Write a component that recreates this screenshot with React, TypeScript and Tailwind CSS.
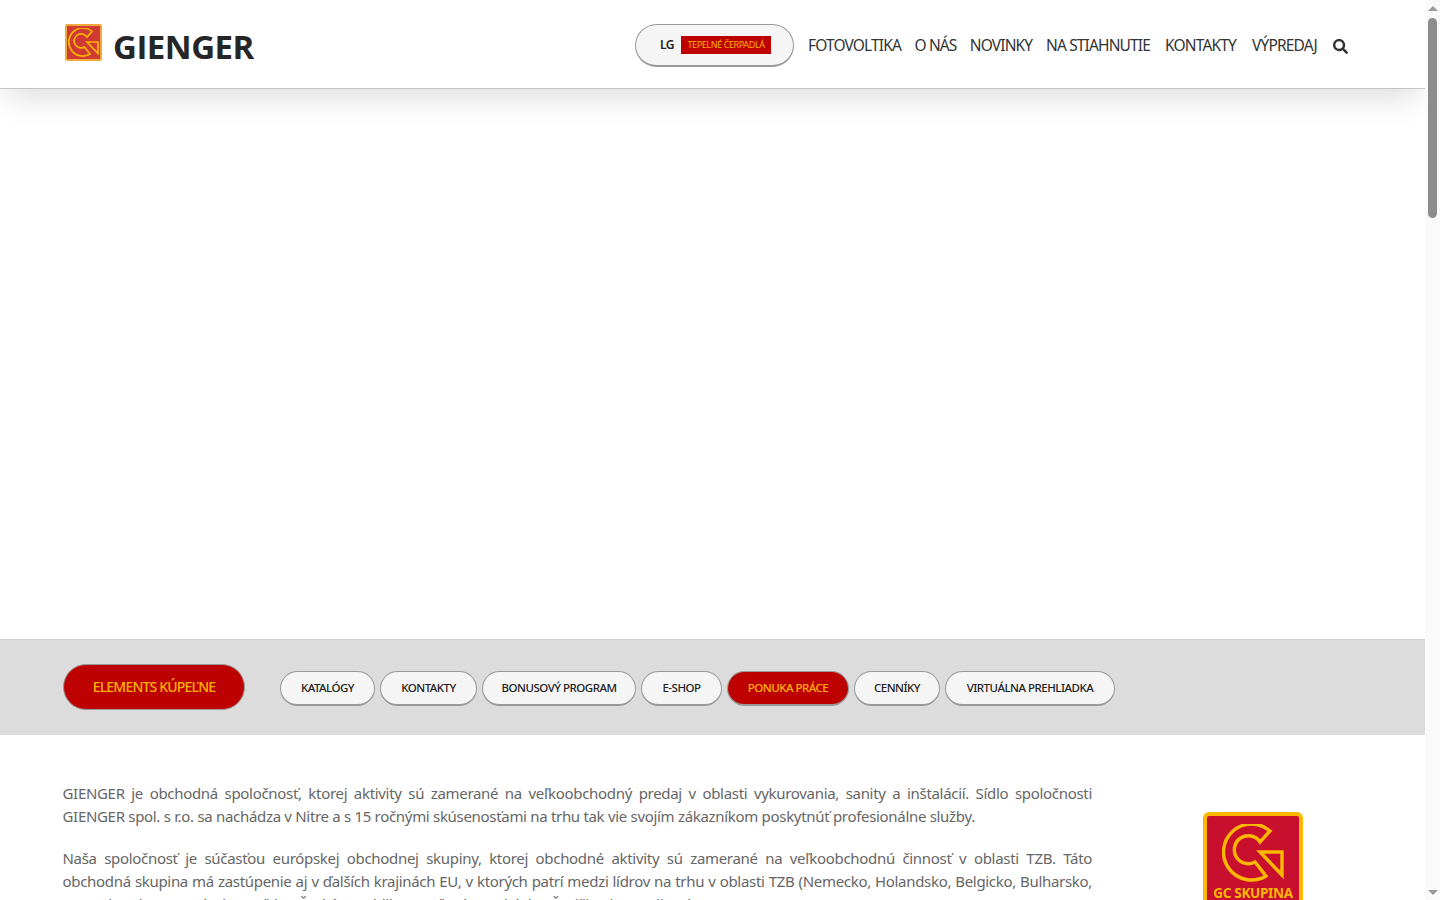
/**
 * Gienger landing page: header, hero gap, link bar and intro text.
 */

import { FaSearch } from 'react-icons/fa';

const navLinks = [
  { label: 'FOTOVOLTIKA', width: 'w-[91px]' },
  { label: 'O NÁS', width: 'w-[41px]' },
  { label: 'NOVINKY', width: 'w-[60px]' },
  { label: 'NA STIAHNUTIE', width: 'w-[104px]' },
  { label: 'KONTAKTY', width: 'w-[71px]' },
  { label: 'VÝPREDAJ', width: 'w-[67px]' },
];

const pillLinks = [
  { label: 'KATALÓGY', width: 'w-[95px]' },
  { label: 'KONTAKTY', width: 'w-[97px]' },
  { label: 'BONUSOVÝ PROGRAM', width: 'w-[154px]' },
  { label: 'E-SHOP', width: 'w-[81px]' },
  { label: 'PONUKA PRÁCE', width: 'w-[122px]', active: true },
  { label: 'CENNÍKY', width: 'w-[86px]' },
  { label: 'VIRTUÁLNA PREHLIADKA', width: 'w-[170px]' },
];

function GMark({ className }: { className?: string }) {
  return (
    <svg className={className} viewBox="0 0 62 58" fill="none" stroke="#fbb800" strokeWidth={3.4} strokeLinejoin="miter">
      <path d="M48 7 A28 28 0 1 0 44 52 L33 38 A14 14 0 1 1 38 18 Z" />
      <path d="M38 28 H60 V51 Z" />
    </svg>
  );
}

function Logo() {
  return (
    <div className="flex items-end gap-[11px] pl-[2px]">
      <div className="w-[37px] h-[37px] bg-[#cf3a34] border-2 border-[#f2a83a] rounded-[2px] flex items-center justify-center">
        <GMark className="w-[31px] h-[29px]" />
      </div>
      <span className="font-['Open_Sans',sans-serif] font-bold text-[33px] leading-[34px] tracking-[-0.5px] text-[#262626] -mb-[3px]">
        GIENGER
      </span>
    </div>
  );
}

function Header() {
  return (
    <header className="relative z-10 h-[89px] bg-white border-b border-[#c4c4c4] shadow-[0_16px_30px_-6px_rgba(0,0,0,0.13)] flex items-start pl-[63px] pr-[77px]">
      <div className="pt-[24px]">
        <Logo />
      </div>
      <nav className="ml-auto flex items-center h-[42px] mt-[25px] gap-[15px]">
        <a className="w-[159px] h-[43px] -mt-[1px] rounded-full bg-[#f5f5f5] border border-[#999] border-b-2 flex items-center pl-[24px] gap-[7px]">
          <span className="text-[12px] font-semibold text-[#222] tracking-[-0.5px]">LG</span>
          <span className="w-[90px] h-[18px] bg-[#bd0000] text-[#ffb400] text-[9px] leading-[18px] text-center tracking-[-0.4px]">
            TEPELNÉ ČERPADLÁ
          </span>
        </a>
        {navLinks.map((link) => (
          <a
            key={link.label}
            className={`${link.width} flex justify-center text-[15.5px] text-[#333] tracking-[-0.85px] whitespace-nowrap`}
          >
            {link.label}
          </a>
        ))}
        <FaSearch className="w-[15px] h-[15px] text-[#333]" />
      </nav>
    </header>
  );
}

function LinkBar() {
  return (
    <div className="h-[96px] bg-[#dcdcdc] border-t border-[#d0d0d0] flex items-center pl-[63px]">
      <a className="w-[182px] h-[46px] -mt-[2px] rounded-full bg-[#bd0000] border border-[#999] text-[#ffb400] text-[14px] font-medium tracking-[-0.8px] flex items-center justify-center">
        ELEMENTS KÚPEĽNE
      </a>
      <div className="flex ml-[35px] gap-[5px] mt-[1px]">
        {pillLinks.map((pill) => (
          <a
            key={pill.label}
            className={`${pill.width} h-[35px] rounded-full border border-[#999] border-b-2 text-[11.5px] font-medium tracking-[-0.5px] flex items-center justify-center ${
              pill.active ? 'bg-[#bd0000] text-[#ffb400]' : 'bg-[#f5f5f5] text-[#222]'
            }`}
          >
            {pill.label}
          </a>
        ))}
      </div>
    </div>
  );
}

function Intro() {
  return (
    <section className="flex pl-[62.5px] pt-[47px]">
      <div className="w-[1029.5px] text-[15px] leading-[23px] text-[#666] text-justify tracking-[-0.31px]">
        <p className="mb-[19px]">
          GIENGER je obchodná spoločnosť, ktorej aktivity sú zamerané na veľkoobchodný predaj v oblasti vykurovania, sanity a inštalácií. Sídlo spoločnosti GIENGER spol. s r.o. sa nachádza v Nitre a s 15 ročnými skúsenosťami na trhu tak vie svojím zákazníkom poskytnúť profesionálne služby.
        </p>
        <p>
          Naša spoločnosť je súčasťou európskej obchodnej skupiny, ktorej obchodné aktivity sú zamerané na veľkoobchodnú činnosť v oblasti TZB. Táto obchodná skupina má zastúpenie aj v ďalších krajinách EU, v ktorých patrí medzi lídrov na trhu v oblasti TZB (Nemecko, Holandsko, Belgicko, Bulharsko, Luxembursko, Francúzsko, Poľsko, Česká republika, Maďarsko, Rakúsko, Švajčiarsko a Taliansko).
        </p>
      </div>
      <div className="ml-[111px] mt-[30px] w-[100px] h-[100px] shrink-0 rounded-[6px] bg-[#c8102e] border-[4px] border-[#fbb800] flex flex-col items-center pt-[8px]">
        <GMark className="w-[62px] h-[58px]" />
        <span className="text-[13.5px] font-bold text-[#fbb800] leading-[16px] mt-[3px] whitespace-nowrap tracking-[-0.3px]">GC SKUPINA</span>
      </div>
    </section>
  );
}

function Scrollbar() {
  return (
    <div className="w-[15px] shrink-0 h-full bg-[#fafafa] flex flex-col items-center">
      <div className="mt-[6px] w-0 h-0 border-x-[5px] border-x-transparent border-b-[5px] border-b-[#999]" />
      <div className="mt-[7px] w-[9px] h-[200px] rounded-full bg-[#8c8c8c]" />
      <div className="mt-auto mb-[5px] w-0 h-0 border-x-[5px] border-x-transparent border-t-[5px] border-t-[#999]" />
    </div>
  );
}

export default function App() {
  return (
    <div className="flex h-[900px] overflow-hidden bg-white font-['Noto_Sans',sans-serif]">
      <main className="flex-1 min-w-0 overflow-hidden">
        <Header />
        <div className="h-[550px]" />
        <LinkBar />
        <Intro />
      </main>
      <Scrollbar />
    </div>
  );
}
